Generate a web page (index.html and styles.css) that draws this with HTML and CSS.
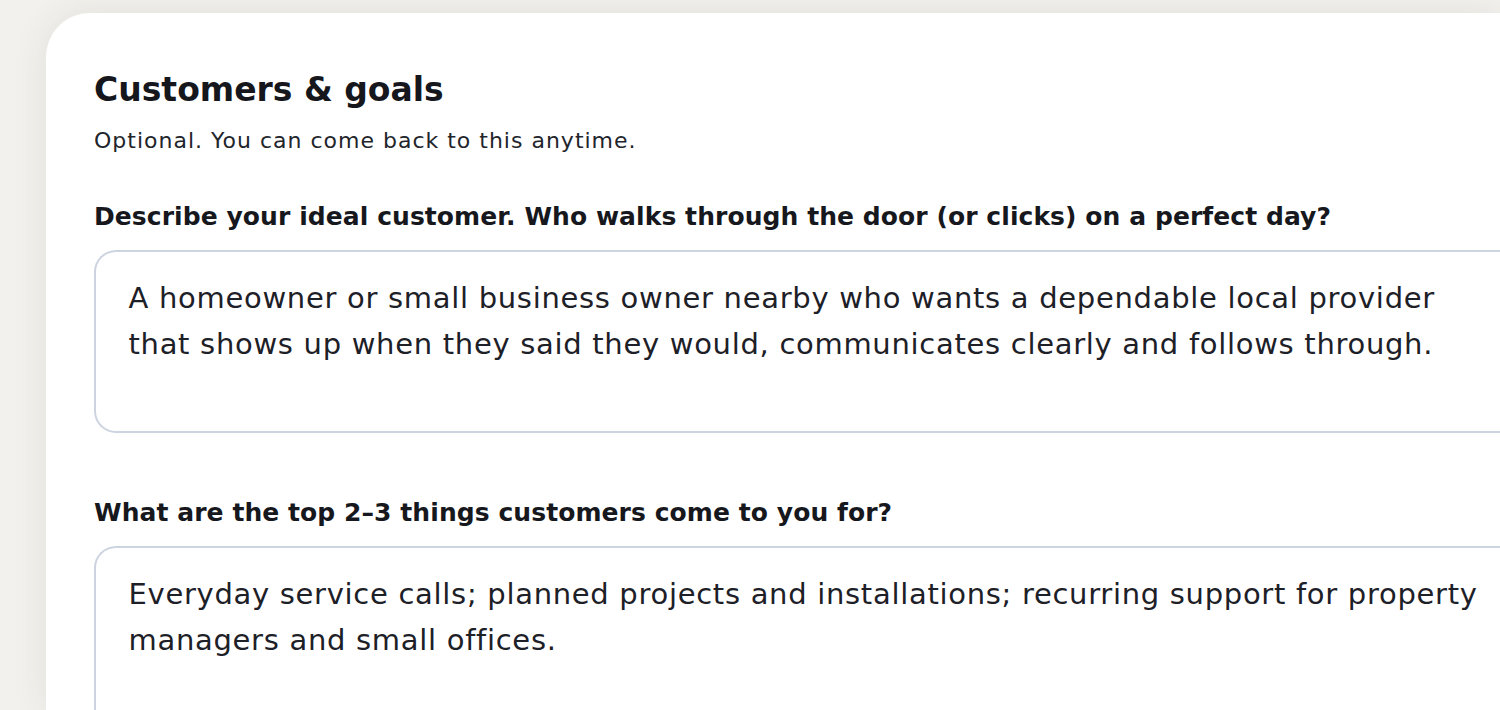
FILE: index.html
```html
<!DOCTYPE html>
<html lang="en">
<head>
<meta charset="utf-8">
<title>Customers &amp; goals</title>
<link rel="stylesheet" href="styles.css">
</head>
<body>
<main class="card">
  <h1 class="title">Customers &amp; goals</h1>
  <p class="subtitle">Optional. You can come back to this anytime.</p>

  <section class="field">
    <label class="field-label" for="ideal">Describe your ideal customer. Who walks through the door (or clicks) on a perfect day?</label>
    <textarea class="field-input" id="ideal" readonly>A homeowner or small business owner nearby who wants a dependable local provider that shows up when they said they would, communicates clearly and follows through.</textarea>
  </section>

  <section class="field field-last">
    <label class="field-label" for="top">What are the top 2–3 things customers come to you for?</label>
    <textarea class="field-input" id="top" readonly>Everyday service calls; planned projects and installations; recurring support for property managers and small offices.</textarea>
  </section>
</main>
</body>
</html>
```
FILE: styles.css
```css
html, body {
  margin: 0;
  padding: 0;
  height: 100%;
  overflow: hidden;
}

body {
  background: #f3f1ed;
  font-family: "DejaVu Sans", "Noto Sans", sans-serif;
  color: #171a20;
  padding: 13px 0 0 46px;
  box-sizing: border-box;
  display: flex;
}

.card {
  flex: 1;
  display: flex;
  flex-direction: column;
  background: #ffffff;
  border-radius: 44px 0 0 0;
  box-shadow: 0 0 36px rgba(60, 55, 45, 0.09);
  padding: 57px 0 0 48px;
  box-sizing: border-box;
  overflow: hidden;
}

.title {
  margin: 0;
  font-size: 33px;
  line-height: 40px;
  font-weight: 700;
  color: #15171c;
}

.subtitle {
  margin: 16px 0 0;
  font-size: 22px;
  line-height: 30px;
  letter-spacing: 1px;
  color: #22252b;
}

.field {
  display: flex;
  flex-direction: column;
  margin-top: 45px;
}

.field + .field {
  margin-top: 64px;
}

.field-last {
  flex: 1;
  min-height: 0;
}

.field-label {
  display: block;
  font-size: 25px;
  line-height: 32px;
  font-weight: 700;
  letter-spacing: 0.07px;
  color: #16181d;
  margin-bottom: 17px;
}

.field-input {
  display: block;
  height: 183px;
  box-sizing: border-box;
  margin: 0;
  padding: 23px 0 24px 32.5px;
  border: 2px solid #cdd4e0;
  border-right: none;
  border-radius: 22px 0 0 22px;
  background: #ffffff;
  font-family: "DejaVu Sans", "Noto Sans", sans-serif;
  font-size: 29px;
  line-height: 46px;
  letter-spacing: 0.7px;
  color: #1d2027;
  resize: none;
  overflow: hidden;
  outline: none;
}

.field-last .field-input {
  flex: 1;
  height: auto;
  min-height: 0;
  border-bottom: none;
  border-radius: 22px 0 0 0;
}
```
